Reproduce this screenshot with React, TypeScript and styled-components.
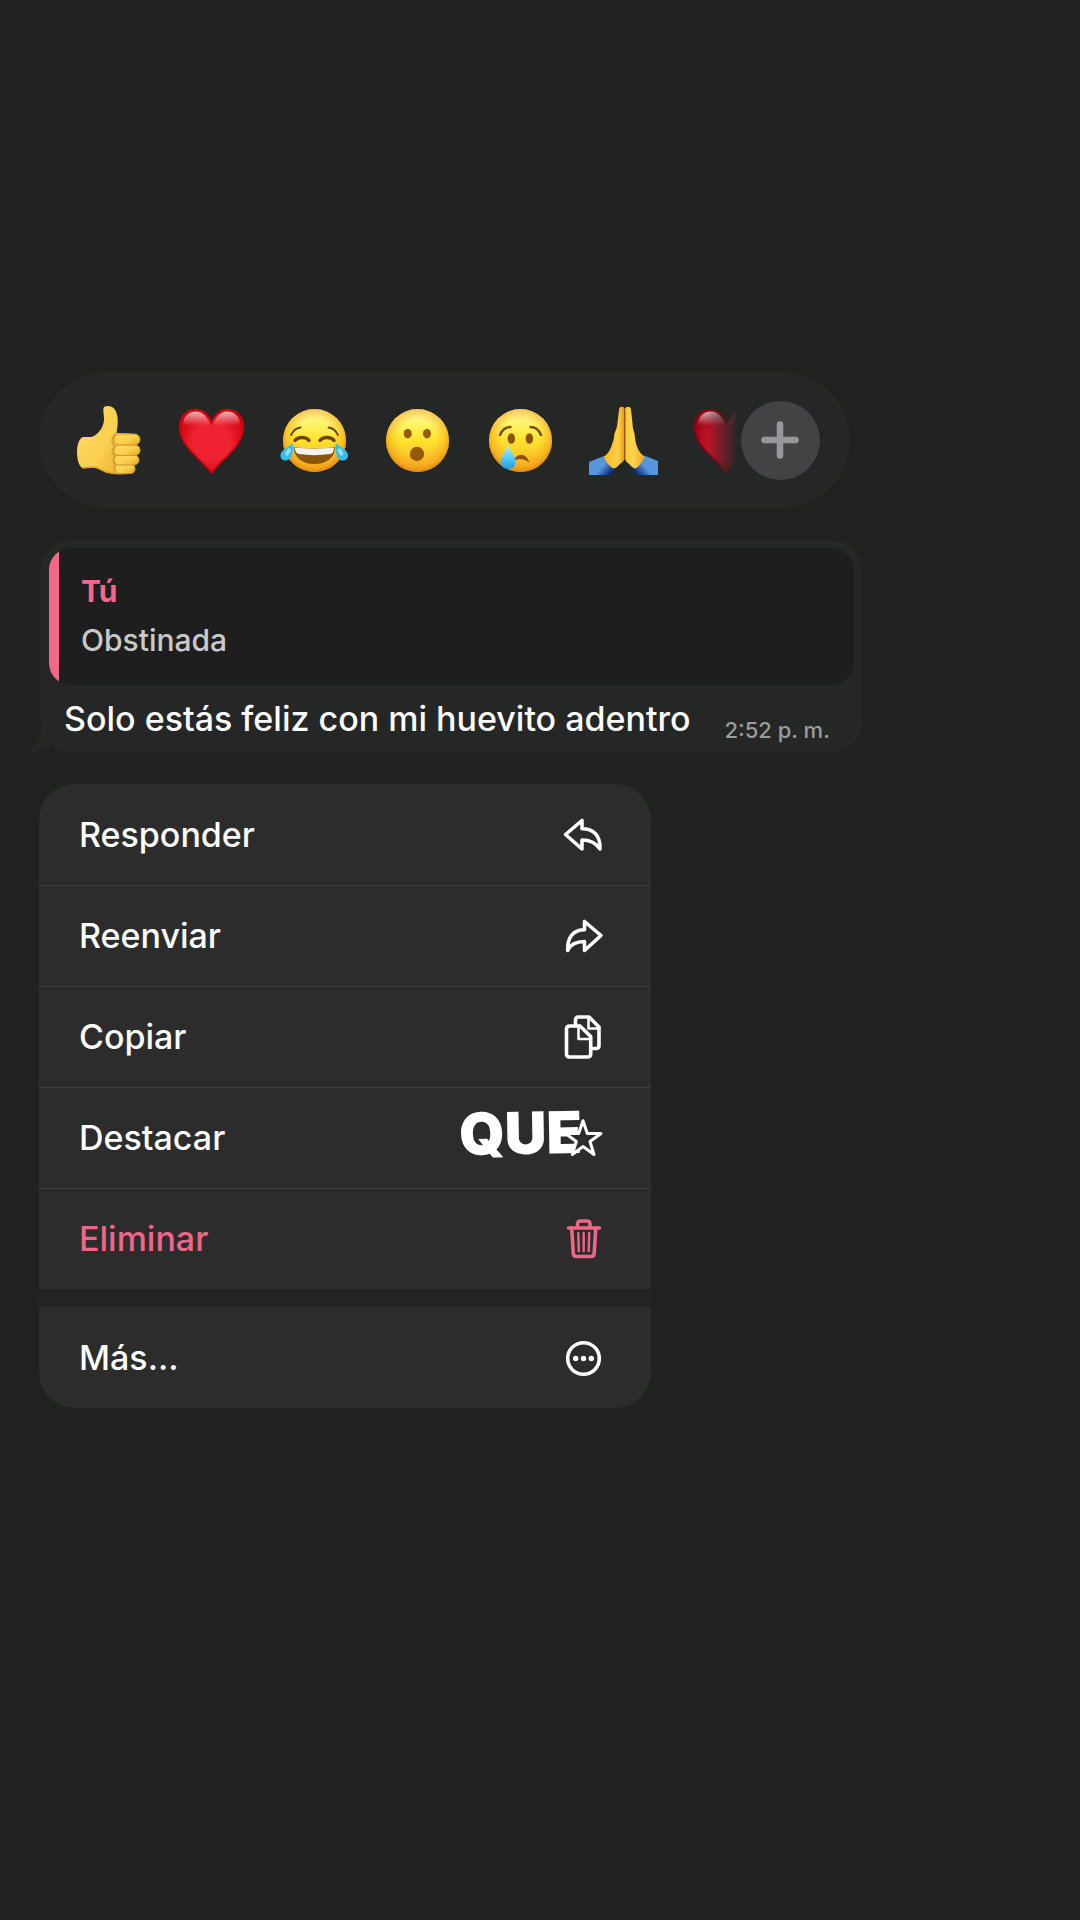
import React from 'react';
import styled, { createGlobalStyle } from 'styled-components';

export default function App() {
  return (
    <StPage>
      <GlobalStyle />
      <StReactionBar>
        <StReactionList>
          {reactions.map(({ name, Icon }) => (
            <StReaction key={name} type="button" aria-label={name}>
              <Icon />
            </StReaction>
          ))}
        </StReactionList>
        <StAddButton type="button" aria-label="Más reacciones">
          <svg width="38" height="38" viewBox="0 0 38 38">
            <path d="M19 3.500V34.500M3.500 19H34.500" stroke="#98979b" strokeWidth="6.500" strokeLinecap="round" />
          </svg>
        </StAddButton>
      </StReactionBar>

      <StBubble>
        <StQuote>
          <StAuthor>Tú</StAuthor>
          <StQuoteText>Obstinada</StQuoteText>
        </StQuote>
        <StMessage>
          <StText>Solo estás feliz con mi huevito adentro</StText>
          <StTime>2:52 p. m.</StTime>
        </StMessage>
        <StTail width="30" height="24" viewBox="0 0 30 24">
          <path d="M14 0C14 12 8 20 0 23C10 24 18 22 23 18L30 10V0Z" fill="#252726" />
        </StTail>
      </StBubble>

      <StMenu>
        <StMenuGroup>
          {actions.map(({ label, Icon, danger, sticker }) => (
            <StMenuItem key={label} type="button" $danger={danger}>
              {label}
              <StIconBox>
                {sticker && <StSticker>{sticker}</StSticker>}
                <StIcon viewBox="0 0 46 46">
                  <Icon />
                </StIcon>
              </StIconBox>
            </StMenuItem>
          ))}
        </StMenuGroup>
        <StMenuGroup>
          <StMenuItem type="button">
            Más...
            <StIconBox>
              <StIcon viewBox="0 0 46 46">
                <MoreIcon />
              </StIcon>
            </StIconBox>
          </StMenuItem>
        </StMenuGroup>
      </StMenu>
    </StPage>
  );
}

/* reactions */

function Face({ id, children }: { id: string; children: React.ReactNode }) {
  return (
    <svg width="70" height="70" viewBox="0 0 70 70">
      <defs>
        <linearGradient id={`${id}-base`} x1="0" y1="0" x2="0" y2="1">
          <stop offset="0" stopColor="#fff0a0" />
          <stop offset="0.22" stopColor="#fff56e" />
          <stop offset="0.48" stopColor="#fee52c" />
          <stop offset="1" stopColor="#f5ab2a" />
        </linearGradient>
        <radialGradient id={`${id}-edge`} cx="0.5" cy="0.46" r="0.54">
          <stop offset="0.55" stopColor="#f5a114" stopOpacity="0" />
          <stop offset="0.85" stopColor="#f39c14" stopOpacity="0.5" />
          <stop offset="1" stopColor="#e0820c" stopOpacity="0.95" />
        </radialGradient>
      </defs>
      <circle cx="35.500" cy="35.500" r="31.500" fill={`url(#${id}-base)`} />
      <circle cx="35.500" cy="35.500" r="31.500" fill={`url(#${id}-edge)`} />
      {children}
    </svg>
  );
}

function ThumbIcon() {
  return (
    <svg width="70" height="70" viewBox="0 0 70 70">
      <defs>
        <linearGradient id="thumb" x1="0" y1="0" x2="1" y2="0.8">
          <stop offset="0" stopColor="#ffdc62" />
          <stop offset="0.6" stopColor="#fbcf50" />
          <stop offset="1" stopColor="#e8ae2c" />
        </linearGradient>
      </defs>
      <path
        d="M10 32C14 32 18 32.500 21 31C27 27 31 21 31 14C31 9 29.500 4 31 2C34 0 39 1 41.500 4C46 11 45 19 43.500 28L58 28.500V67.500C51 69.500 40 69 33 67C28 65 24 62 20 62L9.500 63C5.500 61 4 53 4 47C4 40 6 33.500 10 32Z"
        fill="url(#thumb)"
      />
      <path d="M9.500 63L20 62C24 62 28 65 33 67C40 69 51 69.500 58 67.500" fill="none" stroke="#e0a020" strokeWidth="1.500" />
      <path d="M43.500 28C39 31 38 38 42 41C38 45 39 49 42 51C39 55 41 59 43 60C40 64 42 67 46 68.500" fill="none" stroke="#dba535" strokeWidth="2" />
      <g fill="url(#thumb)" stroke="#d09a2a" strokeWidth="1">
        <rect x="42" y="59" width="20" height="9.500" rx="4.500" />
        <rect x="41" y="50" width="25" height="10" rx="5" />
        <rect x="41" y="40" width="26" height="10.500" rx="5" />
        <rect x="41" y="29" width="26" height="11" rx="5.500" />
      </g>
    </svg>
  );
}

function HeartIcon() {
  return <Heart id="heart" from="#ee2230" to="#c9000c" />;
}

function DarkHeartIcon() {
  return <Heart id="heart-dark" from="#c8142a" to="#8c000e" />;
}

function Heart({ id, from, to }: { id: string; from: string; to: string }) {
  return (
    <svg width="70" height="70" viewBox="0 0 70 70">
      <defs>
        <radialGradient id={`${id}-fill`} cx="0.5" cy="0.5" r="0.58">
          <stop offset="0" stopColor={from} />
          <stop offset="0.5" stopColor={from} />
          <stop offset="1" stopColor={to} />
        </radialGradient>
        <linearGradient id={`${id}-shine`} x1="0" y1="0" x2="0" y2="1">
          <stop offset="0" stopColor="#fff" stopOpacity="0.7" />
          <stop offset="0.9" stopColor="#fff" stopOpacity="0" />
        </linearGradient>
      </defs>
      <path
        d="M35.500 18C32 9 26 4.500 19.500 4.500C10 4.500 3.500 12 3.500 22C3.500 41 25 54 35.500 68C46 54 67.500 41 67.500 22C67.500 12 61 4.500 51.500 4.500C45 4.500 39 9 35.500 18Z"
        fill={`url(#${id}-fill)`}
        stroke={to}
        strokeWidth="1.500"
      />
      <path d="M7 20C7 11 13 6.500 20 6.500C27 6.500 31 12 34 20C26 23 14 23 7 20Z" fill={`url(#${id}-shine)`} />
      <path d="M64 20C64 11 58 6.500 51 6.500C44 6.500 40 12 37 20C45 23 57 23 64 20Z" fill={`url(#${id}-shine)`} />
    </svg>
  );
}

function LaughIcon() {
  return (
    <Face id="laugh">
      <g fill="none" stroke="#70420c" strokeLinecap="round">
        <path d="M12 30C14 26 17 23 21.500 22.500M59 30C57 26 54 23 49.500 22.500" strokeWidth="1.800" />
        <path d="M16 35.500C19 31.500 27 31.500 30 35.500M41 35.500C44 31.500 52 31.500 55 35.500" strokeWidth="3.400" />
      </g>
      <path d="M14.500 42C28 44 43 44 56 42C56 53 47 59 35.500 59C24 59 15 53 14.500 42Z" fill="#8a560b" />
      <path d="M15.500 42.500C28 44 43 44 55 42.500C55 46 53.500 48.500 51.500 49C40 50.500 30 50.500 19.500 49C17 48 16 46 15.500 42.500Z" fill="#f7f4ee" />
      <g fill="#35bdf2">
        <path d="M13.500 38C14.500 44 14 55 7 55.500C1.500 56 0 50 3 46.500C5.500 43.500 10 42 13.500 38Z" />
        <path d="M57 38C56 44 56.500 55 63.500 55.500C69 56 70.500 50 67.500 46.500C65 43.500 60.500 42 57 38Z" />
      </g>
      <g fill="#8fe0fb">
        <ellipse cx="9" cy="47" rx="2" ry="4" transform="rotate(30 9 47)" />
        <ellipse cx="61.500" cy="47" rx="2" ry="4" transform="rotate(-30 61.500 47)" />
      </g>
    </Face>
  );
}

function WowIcon() {
  return (
    <Face id="wow">
      <g fill="#955b09">
        <ellipse cx="25.700" cy="28.700" rx="4" ry="4.800" />
        <ellipse cx="45" cy="28.700" rx="4" ry="4.800" />
        <circle cx="35" cy="49" r="7.200" />
      </g>
    </Face>
  );
}

function CryIcon() {
  return (
    <Face id="cry">
      <defs>
        <linearGradient id="tear" x1="0" y1="0" x2="0" y2="1">
          <stop offset="0" stopColor="#b9ecff" />
          <stop offset="0.5" stopColor="#5fcdfb" />
          <stop offset="1" stopColor="#109fe8" />
        </linearGradient>
      </defs>
      <path d="M15 30C17 25 21 22 25.500 22M45.500 22C50 22 54 25 56 30" fill="none" stroke="#7c4b0a" strokeWidth="2.400" strokeLinecap="round" />
      <ellipse cx="26.300" cy="33.500" rx="3.700" ry="5.300" fill="#8a5209" />
      <ellipse cx="44.400" cy="33.500" rx="3.700" ry="5.300" fill="#8a5209" />
      <path d="M29 55C33 48 41 49 43.500 56.500C39 53 34 53 29 55Z" fill="#8a5209" stroke="#8a5209" />
      <path d="M23 40C25 47 31 51 30.500 57C30 62 27 64 23 64C19 64 15.500 61 15.500 57C15.500 51 21 47 23 40Z" fill="url(#tear)" />
    </Face>
  );
}

function PrayIcon() {
  return (
    <svg width="70" height="70" viewBox="0 0 70 70">
      <defs>
        <linearGradient id="palm-left" x1="0" y1="0" x2="1" y2="0">
          <stop offset="0" stopColor="#ffb81c" />
          <stop offset="0.7" stopColor="#ffcf48" />
          <stop offset="1" stopColor="#e79a14" />
        </linearGradient>
        <linearGradient id="palm-right" x1="0" y1="0" x2="1" y2="0">
          <stop offset="0" stopColor="#ffc933" />
          <stop offset="0.4" stopColor="#ffd352" />
          <stop offset="1" stopColor="#f3a916" />
        </linearGradient>
        <linearGradient id="sleeve-left" x1="0" y1="0" x2="1" y2="0.6">
          <stop offset="0.6" stopColor="#5696dc" />
          <stop offset="1" stopColor="#0a2a6c" />
        </linearGradient>
        <linearGradient id="sleeve-right" x1="1" y1="0" x2="0" y2="0.6">
          <stop offset="0.6" stopColor="#5696dc" />
          <stop offset="1" stopColor="#0a2a6c" />
        </linearGradient>
      </defs>
      <path d="M1 57L16 51L28 63L24 70H1Z" fill="url(#sleeve-left)" />
      <path d="M70 56L56 50.500L43 62L47 70H70Z" fill="url(#sleeve-right)" />
      <path d="M31 5C31 1 36 1 36.500 4V54C35 58 32 58 29 62L26 63.500C22 62 17 56 16 51.500C22 48 24 40 26 33C26 27 29 25 29.500 18Z" fill="url(#palm-left)" />
      <path d="M43 5C43 1 38 1 37 4V54C38.500 58 41 58 44 62L47 63.500C51 62 55 56 56.500 51.500C50 47 48 40 47 33C47 27 44.500 25 44.500 18Z" fill="url(#palm-right)" />
      <path d="M36.800 5V55" stroke="#9a5b10" strokeWidth="1.400" />
    </svg>
  );
}

const reactions = [
  { name: 'Me gusta', Icon: ThumbIcon },
  { name: 'Me encanta', Icon: HeartIcon },
  { name: 'Me divierte', Icon: LaughIcon },
  { name: 'Me asombra', Icon: WowIcon },
  { name: 'Me entristece', Icon: CryIcon },
  { name: 'Gracias', Icon: PrayIcon },
  { name: 'Corazón', Icon: DarkHeartIcon },
];

/* menu icons */

function ReplyIcon() {
  return <path d="M5.500 22.500L22 8.500V16.700C33 16.700 40.500 23 40 37C36 31 31 28 22 28V37Z" />;
}

function ForwardIcon() {
  return <path d="M41 22.500L24.500 8.500V16.700C13.500 16.700 7 24 7.700 37.500C10.500 31 16 28.500 24.500 28.500V37.500Z" />;
}

function CopyIcon() {
  return (
    <>
      <path d="M9.500 12H20L30.700 22.500V40C30.700 42 29.500 43 27.500 43H9.500C7.500 43 6.500 42 6.500 40V15C6.500 13 7.500 12 9.500 12Z" />
      <path d="M18.500 12V25H30.700" strokeWidth="2.600" />
      <path d="M15.500 12V6C15.500 4 16.500 3 18.500 3H29L39 13V31.500C39 33.500 38 34.500 36 34.500H31" />
      <path d="M28.500 3V14.500H39" strokeWidth="2.600" />
    </>
  );
}

function StarIcon() {
  return (
    <path
      d="M23 5.700L27.300 18.500H41L30 26.500L34 39.500L23 31.500L12.300 39.500L16.300 26.500L5.500 18.500H18.700Z"
      fill="#2c2c2c"
      strokeWidth="3"
    />
  );
}

function TrashIcon() {
  return (
    <>
      <path d="M8.500 12H39.500M17.500 12V8C17.500 6 18.500 5 20.500 5H27C29 5 30 6 30 8V12" />
      <path d="M11.700 12L13.300 37.500C13.500 39.500 14.500 40.500 16.500 40.500H31C33 40.500 34 39.500 34.200 37.500L35.800 12" />
      <path d="M18.300 17L18.800 35M23.700 17V35M29.200 17L28.700 35" strokeWidth="2.400" />
    </>
  );
}

function MoreIcon() {
  return (
    <>
      <circle cx="23.500" cy="23.500" r="15.800" />
      <g fill="currentColor" stroke="none">
        <circle cx="15.700" cy="23.500" r="2.700" />
        <circle cx="23.500" cy="23.500" r="2.700" />
        <circle cx="31.300" cy="23.500" r="2.700" />
      </g>
    </>
  );
}

const actions = [
  { label: 'Responder', Icon: ReplyIcon },
  { label: 'Reenviar', Icon: ForwardIcon },
  { label: 'Copiar', Icon: CopyIcon },
  { label: 'Destacar', Icon: StarIcon, sticker: 'QUE' },
  { label: 'Eliminar', Icon: TrashIcon, danger: true },
];

const GlobalStyle = createGlobalStyle`
  * {
    box-sizing: border-box;
  }

  body {
    margin: 0;
    background-color: #202220;
    font-family: Inter, 'Liberation Sans', sans-serif;
  }

  button {
    padding: 0;
    border: none;
    background: none;
    font: inherit;
    color: inherit;
  }
`;

const StPage = styled.main`
  display: flex;
  flex-direction: column;
  align-items: flex-start;
  gap: 32px;
  min-height: 100vh;
  padding: 372px 40px 40px 39px;
`;

const StReactionBar = styled.div`
  display: flex;
  align-items: center;
  width: 81%;
  height: 136px;
  padding: 0 30px 0 34px;
  border-radius: 68px;
  background-color: #252726;
`;

/* the last reaction fades out before the add button */
const StReactionList = styled.div`
  display: flex;
  flex: 1;
  gap: 33px;
  min-width: 0;
  overflow: hidden;
  mask-image: linear-gradient(to right, #000 calc(100% - 36px), transparent calc(100% - 3px));
`;

const StReaction = styled.button`
  flex: none;
  width: 70px;
  height: 70px;

  svg {
    display: block;
  }
`;

const StAddButton = styled.button`
  display: flex;
  flex: none;
  align-items: center;
  justify-content: center;
  width: 79px;
  height: 79px;
  border-radius: 50%;
  background-color: #434345;
`;

const StBubble = styled.article`
  position: relative;
  width: 82%;
  margin-left: 2px;
  padding: 8px;
  border-radius: 30px;
  background-color: #252726;
`;

const StQuote = styled.blockquote`
  margin: 0;
  padding: 19px 32px 20px;
  border-radius: 22px;
  background: linear-gradient(to right, #f4678a 10px, #1e1e1e 10px);
`;

const StAuthor = styled.div`
  font-size: 30px;
  line-height: 49px;
  font-weight: 700;
  color: #f4678a;
`;

const StQuoteText = styled.div`
  font-size: 30px;
  line-height: 49px;
  font-weight: 500;
  color: #c9c9c9;
`;

const StMessage = styled.div`
  display: flex;
  align-items: flex-end;
  justify-content: space-between;
  padding: 11px 24px 2px 15px;
`;

const StText = styled.p`
  margin: 0;
  font-size: 34px;
  line-height: 46px;
  font-weight: 500;
  color: #fcfcfc;
`;

const StTime = styled.time`
  font-size: 22px;
  line-height: 24px;
  font-weight: 500;
  color: #9b9c9c;
`;

const StTail = styled.svg`
  position: absolute;
  left: -14px;
  bottom: 0;
`;

const StMenu = styled.div`
  display: flex;
  flex-direction: column;
  gap: 18px;
  width: 612px;
  max-width: 100%;
  border-radius: 36px;
  overflow: hidden;
  background-color: #232323;
`;

const StMenuGroup = styled.div`
  display: flex;
  flex-direction: column;
`;

const StMenuItem = styled.button<{ $danger?: boolean }>`
  display: flex;
  align-items: center;
  justify-content: space-between;
  height: 101px;
  padding: 0 45px 0 40px;
  background-color: #2c2c2c;
  font-size: 34px;
  line-height: 46px;
  font-weight: 500;
  color: ${({ $danger }) => ($danger ? '#ee6688' : '#fcfcfc')};

  & + & {
    border-top: 1px solid #3e3e3e;
  }
`;

const StIconBox = styled.span`
  position: relative;
  width: 46px;
  height: 46px;
`;

const StIcon = styled.svg`
  position: relative;
  display: block;
  width: 46px;
  height: 46px;
  fill: none;
  stroke: currentColor;
  stroke-width: 3.6px;
  stroke-linecap: round;
  stroke-linejoin: round;
`;

const StSticker = styled.span`
  position: absolute;
  right: 24px;
  bottom: 0;
  font-size: 58px;
  line-height: 56px;
  font-weight: 900;
  color: #fff;
  transform: rotate(-1deg);
`;
